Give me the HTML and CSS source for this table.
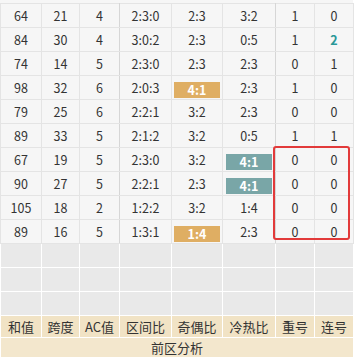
FILE: index.html
```html
<!DOCTYPE html>
<html lang="zh">
<head>
<meta charset="utf-8">
<link rel="stylesheet" href="styles.css">
</head>
<body>
<div class="wrap">
  <table class="grid">
    <colgroup>
      <col class="c1"><col class="c2"><col class="c3"><col class="c4"><col class="c5"><col class="c6"><col class="c7"><col class="c8">
    </colgroup>
    <tbody class="data">
      <tr><td>64</td><td>21</td><td class="sep">4</td><td>2:3:0</td><td>2:3</td><td class="sep">3:2</td><td>1</td><td>0</td></tr>
      <tr><td>84</td><td>30</td><td class="sep">4</td><td>3:0:2</td><td>2:3</td><td class="sep">0:5</td><td>1</td><td><b class="hot">2</b></td></tr>
      <tr><td>74</td><td>14</td><td class="sep">5</td><td>2:3:0</td><td>2:3</td><td class="sep">2:3</td><td>0</td><td>1</td></tr>
      <tr><td>98</td><td>32</td><td class="sep">6</td><td>2:0:3</td><td><span class="tag orange">4:1</span></td><td class="sep">2:3</td><td>1</td><td>0</td></tr>
      <tr><td>79</td><td>25</td><td class="sep">6</td><td>2:2:1</td><td>3:2</td><td class="sep">2:3</td><td>0</td><td>0</td></tr>
      <tr class="group"><td>89</td><td>33</td><td class="sep">5</td><td>2:1:2</td><td>3:2</td><td class="sep">0:5</td><td>1</td><td>1</td></tr>
      <tr><td>67</td><td>19</td><td class="sep">5</td><td>2:3:0</td><td>3:2</td><td class="sep"><span class="tag teal">4:1</span></td><td>0</td><td>0</td></tr>
      <tr><td>90</td><td>27</td><td class="sep">5</td><td>2:2:1</td><td>2:3</td><td class="sep"><span class="tag teal">4:1</span></td><td>0</td><td>0</td></tr>
      <tr><td>105</td><td>18</td><td class="sep">2</td><td>1:2:2</td><td>3:2</td><td class="sep">1:4</td><td>0</td><td>0</td></tr>
      <tr><td>89</td><td>16</td><td class="sep">5</td><td>1:3:1</td><td><span class="tag orange">1:4</span></td><td class="sep">2:3</td><td>0</td><td>0</td></tr>
    </tbody>
    <tbody class="blank">
      <tr><td></td><td></td><td></td><td></td><td></td><td></td><td></td><td></td></tr>
      <tr><td></td><td></td><td></td><td></td><td></td><td></td><td></td><td></td></tr>
      <tr><td></td><td></td><td></td><td></td><td></td><td></td><td></td><td></td></tr>
    </tbody>
    <tbody class="head">
      <tr><td>和值</td><td>跨度</td><td>AC值</td><td>区间比</td><td>奇偶比</td><td>冷热比</td><td>重号</td><td>连号</td></tr>
      <tr class="title"><td colspan="8">前区分析</td></tr>
    </tbody>
  </table>
  <div class="mark"></div>
</div>
</body>
</html>
```
FILE: styles.css
```css
html, body {
  margin: 0;
  padding: 0;
  background: #ffffff;
}
body {
  font-family: "Noto Sans CJK SC", "Noto Sans", sans-serif;
  color: #333333;
}
.wrap {
  position: relative;
  width: 353px;
  padding-top: 3px;
  background: #f6f6f6;
}
.grid {
  width: 353px;
  table-layout: fixed;
  border-collapse: collapse;
}
.c1 { width: 41px; }
.c2 { width: 38px; }
.c3 { width: 40px; }
.c4 { width: 52px; }
.c5 { width: 51px; }
.c6 { width: 53px; }
.c7 { width: 39px; }
.c8 { width: 39px; }
.grid td {
  padding: 0;
  text-align: center;
  white-space: nowrap;
}
.data td {
  height: 23px;
  background: #f6f6f6;
  border: 1px solid #e4e4e4;
  font-size: 12.5px;
  line-height: 23px;
}
.data td.sep {
  border-right-color: #d6d6d6;
}
.data tr.group td {
  border-top: 1px solid #cfcfcf;
}
.hot {
  color: #2a9898;
  font-weight: bold;
}
.tag {
  display: inline-block;
  width: 46px;
  height: 16px;
  line-height: 16px;
  color: #ffffff;
  font-weight: bold;
  vertical-align: middle;
}
.orange { background: #dfae63; }
.teal { background: #79a6a7; }
.blank td {
  height: 23px;
  background: #e9e9e9;
  border: 1px solid #ffffff;
}
.head td {
  height: 21px;
  background: #f1e3c5;
  border: 1px solid #ffffff;
  font-size: 13px;
  line-height: 21px;
  color: #333333;
}
.head tr.title td {
  height: 19px;
  background: #f3e7cd;
  line-height: 19px;
}
.mark {
  position: absolute;
  left: 273px;
  top: 146px;
  width: 73px;
  height: 90px;
  border: 2px solid #e23a3a;
  border-radius: 3px;
}
```
